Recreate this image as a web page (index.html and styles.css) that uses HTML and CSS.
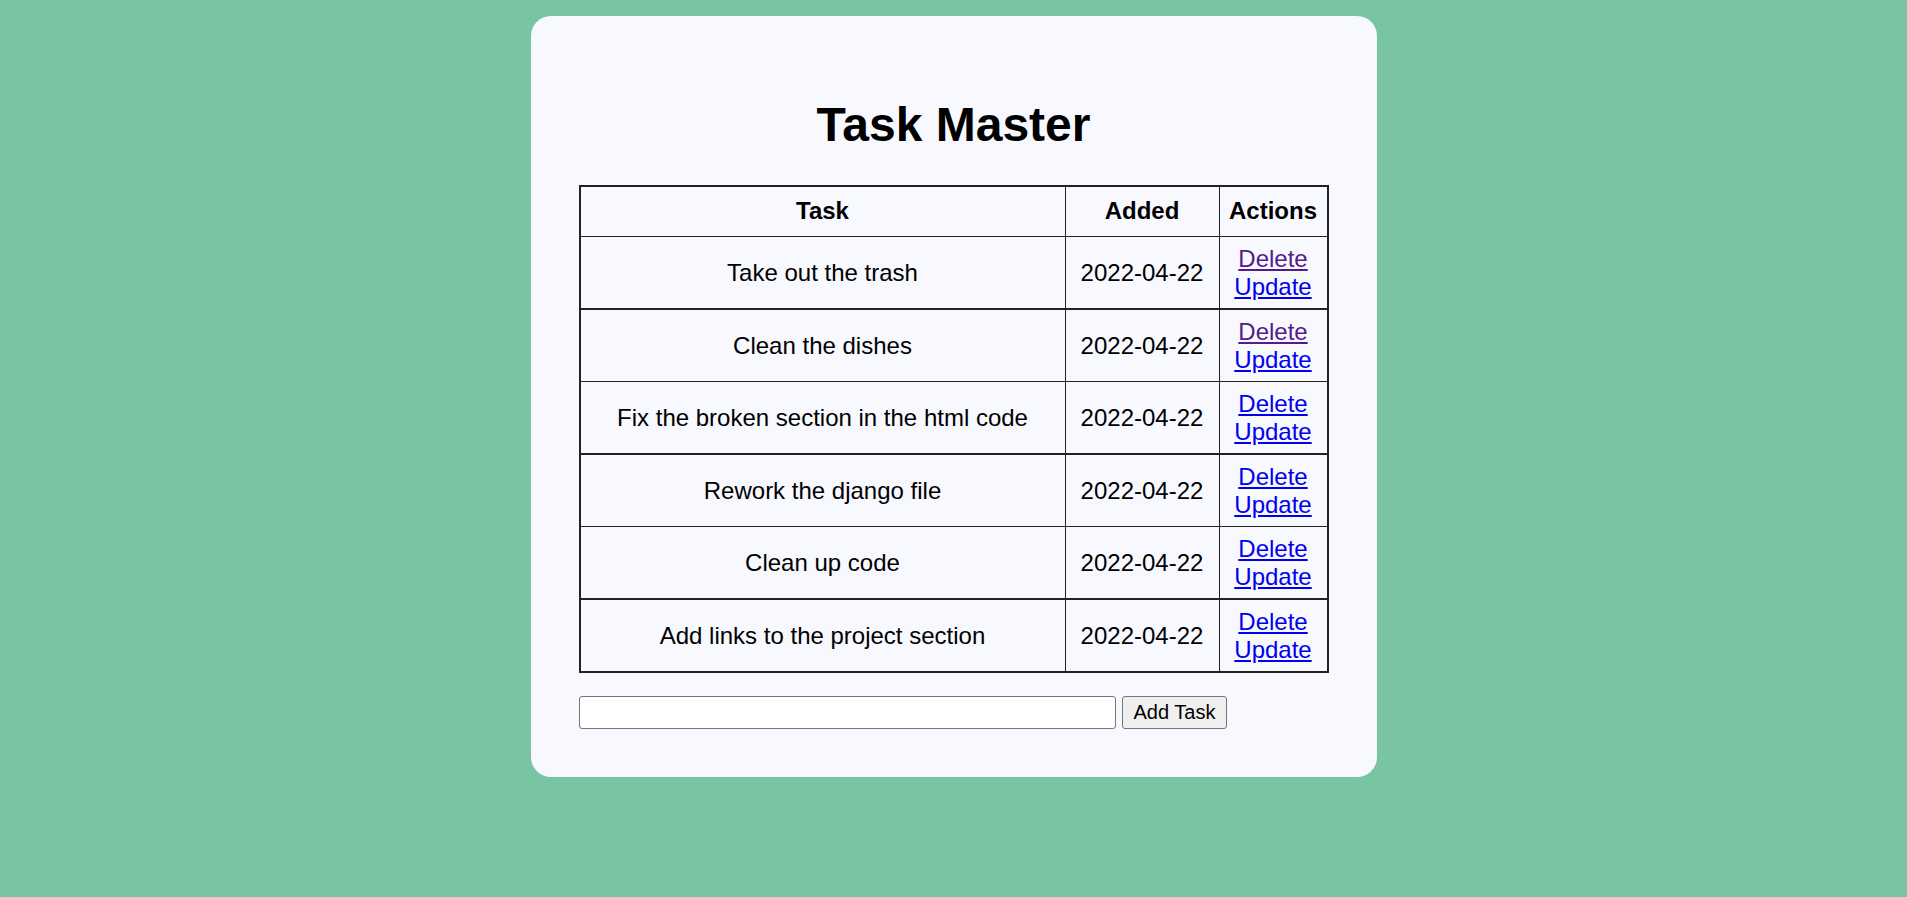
FILE: index.html
```html
<!DOCTYPE html>
<html lang="en">
<head>
<meta charset="utf-8">
<title>Task Master</title>
<link rel="stylesheet" href="styles.css">
</head>
<body>
<div class="card">
  <h1 class="title">Task Master</h1>
  <table class="tasks">
    <thead>
      <tr>
        <th class="col-task">Task</th>
        <th class="col-added">Added</th>
        <th class="col-actions">Actions</th>
      </tr>
    </thead>
    <tbody>
      <tr>
        <td>Take out the trash</td>
        <td>2022-04-22</td>
        <td><a class="link visited" href="#">Delete</a><br><a class="link" href="#">Update</a></td>
      </tr>
      <tr>
        <td>Clean the dishes</td>
        <td>2022-04-22</td>
        <td><a class="link visited" href="#">Delete</a><br><a class="link" href="#">Update</a></td>
      </tr>
      <tr>
        <td>Fix the broken section in the html code</td>
        <td>2022-04-22</td>
        <td><a class="link" href="#">Delete</a><br><a class="link" href="#">Update</a></td>
      </tr>
      <tr>
        <td>Rework the django file</td>
        <td>2022-04-22</td>
        <td><a class="link" href="#">Delete</a><br><a class="link" href="#">Update</a></td>
      </tr>
      <tr>
        <td>Clean up code</td>
        <td>2022-04-22</td>
        <td><a class="link" href="#">Delete</a><br><a class="link" href="#">Update</a></td>
      </tr>
      <tr>
        <td>Add links to the project section</td>
        <td>2022-04-22</td>
        <td><a class="link" href="#">Delete</a><br><a class="link" href="#">Update</a></td>
      </tr>
    </tbody>
  </table>
  <form class="add-form" onsubmit="return false;">
    <input class="task-input" type="text" name="content">
    <button class="add-btn" type="submit">Add Task</button>
  </form>
</div>
</body>
</html>
```
FILE: styles.css
```css
html, body {
  margin: 0;
  padding: 0;
}

body {
  background: #78c4a3;
  font-family: "Liberation Sans", Arial, sans-serif;
  font-size: 24px;
  color: #000;
}

.card {
  width: 750px;
  margin: 16px auto 0;
  padding: 48px;
  background: #f8f8ff;
  border-radius: 20px;
}

.title {
  margin: 33px 0 33px;
  font-size: 48px;
  font-weight: bold;
  text-align: center;
  line-height: normal;
}

.tasks {
  width: 750px;
  table-layout: fixed;
  border-collapse: collapse;
  border: 2px solid #222;
}

.tasks th,
.tasks td {
  border: 1px solid #222;
  text-align: center;
  font-size: 24px;
}

.tasks th {
  padding: 10px 8px 11px;
  font-weight: bold;
}

.tasks td {
  padding: 7.5px 8px;
}

.tasks tbody tr:nth-child(odd) td {
  border-bottom-width: 2px;
}

.col-added { width: 137px; }
.col-actions { width: 91px; }

.link {
  color: #0000ee;
  text-decoration: underline;
}

.link.visited {
  color: #551a8b;
}

.add-form {
  display: flex;
  align-items: center;
  gap: 6px;
  margin-top: 23px;
}

.task-input {
  box-sizing: border-box;
  width: 537px;
  height: 33px;
  margin: 0;
  padding: 2px 4px;
  border: 1px solid #767676;
  border-radius: 3px;
  background: #fff;
  font-family: "Liberation Sans", Arial, sans-serif;
  font-size: 20px;
}

.add-btn {
  box-sizing: border-box;
  height: 33px;
  margin: 0;
  padding: 4px 11px;
  border: 1px solid #767676;
  border-radius: 3px;
  background: #efefef;
  color: #000;
  font-family: "Liberation Sans", Arial, sans-serif;
  font-size: 20px;
  line-height: normal;
}
```
